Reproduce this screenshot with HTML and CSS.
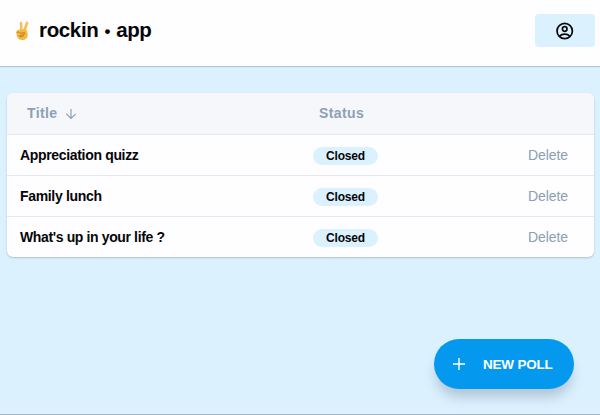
FILE: index.html
```html
<!DOCTYPE html>
<html lang="en">
<head>
<meta charset="utf-8">
<title>rockin • app</title>
<link rel="stylesheet" href="styles.css">
</head>
<body>
<header class="topbar">
  <div class="brand">
    <svg class="hand" viewBox="0 0 16 20" aria-hidden="true">
      <path d="M6.3 9 6 2M9.6 9 12 1.8" fill="none" stroke="#f3c25a" stroke-width="2.7" stroke-linecap="round"/>
      <path d="M1.3 10.5Q2.5 8.2 4.5 8.8L10.8 8Q13 10 12.8 13.8C12.5 17.5 10.5 19 7.2 19C3.5 19 1.2 16.5 1.3 10.5Z" fill="#f5b940"/>
      <path d="M2 11.2Q3.7 10.3 5 12.2L9.5 11.8Q10.2 13.4 7.8 14L5.4 14.4M4 15.2Q6.5 16.4 8.5 15" fill="none" stroke="#c47e25" stroke-width="1" stroke-linecap="round"/>
    </svg>
    <span class="name">rockin <span class="dot">•</span> app</span>
  </div>
  <button class="account" aria-label="Account">
    <svg viewBox="0 0 20 20" width="20" height="20" fill="none" stroke="#05080a" stroke-width="1.7"><circle cx="9.7" cy="10" r="7.7"/><circle cx="9.7" cy="8" r="2.3"/><path d="M4.5 15.3C7 12.5 12.4 12.5 14.9 15.3"/></svg>
  </button>
</header>
<main class="content">
  <section class="polls">
    <div class="row head">
      <div class="title">Title
        <svg class="arrow" viewBox="0 0 12 12" width="12" height="12" fill="none" stroke="#8da0b6" stroke-width="1.2"><path d="M6 1v9.5M1.3 5.8 6 10.5l4.7-4.7"/></svg>
      </div>
      <div class="status">Status</div>
      <div></div>
    </div>
    <div class="row">
      <div class="title">Appreciation quizz</div>
      <div class="status"><span class="chip">Closed</span></div>
      <div class="delete">Delete</div>
    </div>
    <div class="row">
      <div class="title">Family lunch</div>
      <div class="status"><span class="chip">Closed</span></div>
      <div class="delete">Delete</div>
    </div>
    <div class="row">
      <div class="title life">What's up in your life ?</div>
      <div class="status"><span class="chip">Closed</span></div>
      <div class="delete">Delete</div>
    </div>
  </section>
  <button class="new-poll">
    <svg viewBox="0 0 12 12" width="12" height="12" stroke="#fff" stroke-width="1.4"><path d="M6 0v12M0 6h12"/></svg>
    <span>NEW POLL</span>
  </button>
</main>
</body>
</html>
```
FILE: styles.css
```css
* { box-sizing: border-box; }
body {
  margin: 0;
  height: 415px;
  display: flex;
  flex-direction: column;
  overflow: hidden;
  background: #dcf1fe;
  border-bottom: 1px solid #a3b5c0;
  color: #050608;
  font-family: "Liberation Sans", Arial, sans-serif;
}
button { border: 0; padding: 0; font: inherit; }
.topbar {
  flex: none;
  display: flex;
  align-items: center;
  justify-content: space-between;
  height: 66px;
  padding: 0 5px 5px 15px;
  background: #fefdff;
  box-shadow: 0 1px 1px #b4c6d3;
}
.brand { display: flex; align-items: center; }
.hand { width: 16px; height: 20px; margin-right: 8px; }
.name { font-size: 20.5px; font-weight: bold; line-height: 24px; letter-spacing: -0.35px; }
.dot { display: inline-block; font-size: 17px; width: 7px; text-align: center; }
.account {
  display: flex;
  align-items: center;
  justify-content: center;
  width: 60px;
  height: 33px;
  border-radius: 4px;
  background: #dcf1fe;
}
.content {
  flex: 1;
  display: flex;
  flex-direction: column;
  justify-content: space-between;
  padding: 27px 6px 25px 7px;
}
.polls {
  height: 164px;
  overflow: hidden;
  border-radius: 6px;
  background: #fefdff;
  box-shadow: 0 1px 2px #a9c3d3;
}
.row {
  display: grid;
  grid-template-columns: 306px 1fr 66px;
  align-items: center;
  height: 41px;
  padding-bottom: 1px;
  font-size: 14px;
}
.row + .row { border-top: 1px solid #e4e9ee; }
.row .title { padding-left: 13px; font-weight: bold; letter-spacing: -0.33px; }
.row .life { letter-spacing: -0.37px; }
.row.head {
  background: #f5f7fa;
  color: #8da0b6;
  font-weight: bold;
  letter-spacing: 0.4px;
}
.row.head .title {
  display: flex;
  align-items: center;
  gap: 7px;
  padding-left: 20px;
  letter-spacing: 0.4px;
}
.head .status { padding-left: 6px; }
.arrow { margin-top: 2px; }
.chip {
  display: block;
  width: 65px;
  height: 18px;
  margin-top: 2px;
  border-radius: 9px;
  background: #dcf1fe;
  font-size: 12px;
  font-weight: bold;
  line-height: 18px;
  letter-spacing: -0.15px;
  text-align: center;
}
.delete { color: #8b9eb4; letter-spacing: -0.1px; }
.new-poll {
  align-self: flex-end;
  display: flex;
  align-items: center;
  gap: 18px;
  width: 140px;
  height: 50px;
  margin-right: 20px;
  padding-left: 19px;
  border-radius: 25px;
  background: #0499ef;
  box-shadow: 0 10px 12px -2px rgba(90, 110, 130, 0.32);
  color: #fff;
  font-size: 13.5px;
  font-weight: bold;
  letter-spacing: -0.2px;
  white-space: nowrap;
}
```
